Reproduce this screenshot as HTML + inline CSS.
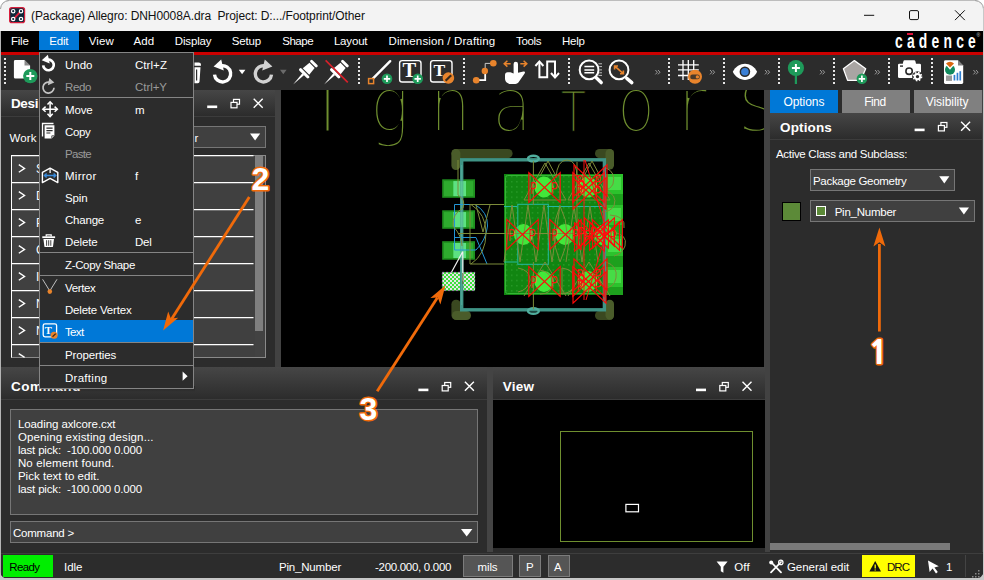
<!DOCTYPE html>
<html><head><meta charset="utf-8"><title>Allegro</title>
<style>
*{box-sizing:border-box;margin:0;padding:0}
html,body{width:984px;height:580px;overflow:hidden;background:#2c2c2c}
body{font-family:"Liberation Sans",sans-serif;font-size:12px;color:#fff;position:relative}
.a{position:absolute}
.t{position:absolute;white-space:pre}
.hd{position:absolute;background:linear-gradient(#464646,#2c2c2c);border-bottom:1px solid #3c3c3c}
.box{position:absolute;background:#404040;border:1px solid #767676}
svg{position:absolute;overflow:visible}
</style></head><body>

<div class="a" style="left:0;top:0;width:984px;height:31px;background:#f3f3f3;border-top:1px solid #bdbdbd"></div>
<svg style="left:0;top:0" width="984" height="31" viewBox="0 0 984 31">
<path d="M0 0H8Q1 1 0 8z" fill="#fff"/><path d="M984 0H976Q983 1 984 8z" fill="#fff"/>
<path d="M0.500 9Q1 1.500 9 0.500" fill="none" stroke="#a0a0a0"/><path d="M983.500 9Q983 1.500 975 0.500" fill="none" stroke="#a0a0a0"/>
<rect x="9.600" y="7.600" width="15" height="15" rx="2.200" fill="#10283a" stroke="#d81e3c" stroke-width="1.200"/>
<path d="M12 20.800L22.400 9.400" stroke="#e0203c" stroke-width="1.900"/>
<g fill="#10283a" stroke="#fff" stroke-width="1.200"><circle cx="13.200" cy="11.200" r="1.700"/><circle cx="21" cy="11.200" r="1.700"/><circle cx="13.200" cy="19" r="1.700"/><circle cx="21" cy="19" r="1.700"/></g>
<path d="M864 15.300h10.200" stroke="#111" stroke-width="1"/>
<rect x="909.500" y="10.600" width="9" height="9" rx="1.400" fill="none" stroke="#111" stroke-width="1"/>
<path d="M955 10.300l9.800 9.800M964.800 10.300l-9.800 9.800" stroke="#111" stroke-width="1"/>
</svg>
<span class="t" style="left:31.0px;top:8.8px;font-size:12px;line-height:14px;letter-spacing:-0.09px;color:#111;">(Package) Allegro: DNH0008A.dra  Project: D:.../Footprint/Other</span>
<div class="a" style="left:0;top:31px;width:984px;height:21px;background:#000"></div>
<div class="a" style="left:39px;top:31px;width:40px;height:19px;background:#0078d7"></div>
<span class="t" style="left:11.1px;top:34.1px;font-size:11.5px;line-height:14px;letter-spacing:-0.28px;color:#fff;">File</span>
<span class="t" style="left:49.2px;top:34.1px;font-size:11.5px;line-height:14px;letter-spacing:-0.15px;color:#fff;">Edit</span>
<span class="t" style="left:88.8px;top:34.1px;font-size:11.5px;line-height:14px;letter-spacing:0.07px;color:#fff;">View</span>
<span class="t" style="left:133.5px;top:34.1px;font-size:11.5px;line-height:14px;letter-spacing:0.15px;color:#fff;">Add</span>
<span class="t" style="left:174.8px;top:34.1px;font-size:11.5px;line-height:14px;letter-spacing:-0.16px;color:#fff;">Display</span>
<span class="t" style="left:231.8px;top:34.1px;font-size:11.5px;line-height:14px;letter-spacing:-0.15px;color:#fff;">Setup</span>
<span class="t" style="left:282.2px;top:34.1px;font-size:11.5px;line-height:14px;letter-spacing:-0.47px;color:#fff;">Shape</span>
<span class="t" style="left:333.9px;top:34.1px;font-size:11.5px;line-height:14px;letter-spacing:-0.17px;color:#fff;">Layout</span>
<span class="t" style="left:388.5px;top:34.1px;font-size:11.5px;line-height:14px;letter-spacing:0.13px;color:#fff;">Dimension / Drafting</span>
<span class="t" style="left:516.0px;top:34.1px;font-size:11.5px;line-height:14px;letter-spacing:-0.35px;color:#fff;">Tools</span>
<span class="t" style="left:561.9px;top:34.1px;font-size:11.5px;line-height:14px;letter-spacing:-0.21px;color:#fff;">Help</span>
<div class="a" style="left:906.800px;top:33.200px;width:6.400px;height:1.700px;background:#e0113a"></div>
<span class="t" style="left:894.600px;top:28.500px;font-size:21px;line-height:24px;letter-spacing:6.400px;font-weight:bold;transform:scaleX(.66);transform-origin:0 0">cadence</span>
<span class="t" style="left:976.500px;top:31.500px;font-size:5px;line-height:6px;color:#ccc">®</span>
<div class="a" style="left:0;top:52px;width:984px;height:3px;background:#cc0000"></div>
<div class="a" style="left:0;top:55px;width:984px;height:35px;background:#2c2c2c"></div>
<svg style="left:0;top:55px" width="984" height="35" viewBox="0 55 984 35">
<defs>
<g id="sepd" fill="#e6e6e6"><rect y="58" width="2" height="2"/><rect y="62" width="2" height="2"/><rect y="66" width="2" height="2"/><rect y="70" width="2" height="2"/><rect y="74" width="2" height="2"/><rect y="78" width="2" height="2"/><rect y="82" width="2" height="2"/></g>
<g id="chev" fill="none" stroke="#a8a8a8" stroke-width=".9"><path d="M0 0l2 2.2l-2 2.2M2.6 0l2 2.2l-2 2.2"/></g>
<g id="gplus"><circle r="5.3" fill="#1e9a5a"/><path d="M-3.2 0h6.4M0 -3.2v6.4" stroke="#fff" stroke-width="1.7"/></g>
<g id="pin" fill="#fff"><polygon points="-1.2,2 1.2,2 0,15.5"/><rect x="-6.2" y="-0.6" width="12.4" height="2.8" rx="1.3"/><polygon points="-4.3,-1.6 4.3,-1.6 3.4,-9.6 -3.4,-9.6"/><rect x="-4.4" y="-13.4" width="8.8" height="2.7" rx="1.2"/></g>
</defs>
<use href="#sepd" x="4"/>
<!-- new file -->
<path d="M15.3 60h9.2l5.6 5.6v11.6a1.4 1.4 0 0 1-1.4 1.4h-13.4a1.4 1.4 0 0 1-1.4-1.4v-15.8a1.4 1.4 0 0 1 1.4-1.4z" fill="#fff"/>
<path d="M24.5 60v5.6h5.6z" fill="#2b2b2b" opacity=".55"/>
<circle cx="30.3" cy="76.1" r="7.2" fill="#1e9a5a"/><path d="M26.3 76.1h8M30.3 72.1v8" stroke="#fff" stroke-width="2"/>
<!-- trash partial -->
<path d="M194.5 62.4h4.2a2.3 2.3 0 0 1 2.3 2.3v1h-6.5z" fill="#fff"/><path d="M194.5 67.2h6l-1 14.6a1.6 1.6 0 0 1-1.6 1.4h-3.4z" fill="#fff"/><path d="M196.6 69.5v11" stroke="#2b2b2b" stroke-width="1.2"/>
<!-- undo -->
<g transform="translate(222.6,74)"><path d="M-1.6 -8.1A8.1 8.1 0 1 1 -8.1 0.6" fill="none" stroke="#fff" stroke-width="3.4"/><polygon points="-1.4,-14.6 -9,-7.6 1.2,-3.4" fill="#fff"/></g>
<polygon points="238.8,69.8 245.4,69.8 242.1,74.2" fill="#fff"/>
<!-- redo -->
<g transform="translate(263.4,74) scale(-1,1)"><path d="M-1.6 -8.1A8.1 8.1 0 1 1 -8.1 0.6" fill="none" stroke="#d2d2d2" stroke-width="3.4"/><polygon points="-1.4,-14.6 -9,-7.6 1.2,-3.4" fill="#d2d2d2"/></g>
<polygon points="280,69.8 286.6,69.8 283.3,74.2" fill="#6a6a6a"/>
<!-- pin -->
<use href="#pin" transform="translate(304.8,72.7) rotate(45) scale(1.07)"/>
<!-- unpin -->
<use href="#pin" transform="translate(335.8,72.7) rotate(45) scale(1.07)"/>
<path d="M325.6 60.4L347.8 82.4" stroke="#d8202a" stroke-width="1.6"/>
<use href="#sepd" x="358"/>
<!-- add line -->
<path d="M371.6 79.8L390.2 61.2" stroke="#fff" stroke-width="2.4" stroke-linecap="round"/>
<rect x="368.6" y="78.6" width="5" height="5" fill="#2b2b2b" stroke="#e8842c" stroke-width="1.5"/>
<use href="#gplus" x="387" y="78.8"/>
<!-- add text -->
<rect x="399.6" y="60.6" width="21.4" height="21.4" rx="2.6" fill="none" stroke="#fff" stroke-width="1.4"/>
<text x="409.3" y="77.4" font-family="Liberation Serif,serif" font-weight="bold" font-size="20.5" fill="#fff" text-anchor="middle">T</text>
<use href="#gplus" x="417.7" y="78.8"/>
<!-- edit text -->
<rect x="430.6" y="60.6" width="21.4" height="21.4" rx="2.6" fill="none" stroke="#fff" stroke-width="1.4"/>
<text x="439.3" y="75.6" font-family="Liberation Serif,serif" font-weight="bold" font-size="17.5" fill="#fff" text-anchor="middle">T</text>
<circle cx="448.4" cy="78" r="5.8" fill="#e8842c"/><path d="M445.6 80.8L451.2 75.2" stroke="#3a2a1a" stroke-width="2.2"/>
<use href="#sepd" x="463"/>
<!-- route -->
<path d="M476.2 80.2H485.2V71" fill="none" stroke="#fff" stroke-width="1.8"/><path d="M485.2 71V63.4H493" fill="none" stroke="#c8c8c8" stroke-width="1"/>
<circle cx="476.2" cy="80.2" r="3.3" fill="#e8842c"/><circle cx="484.8" cy="71" r="3.2" fill="#e8842c"/><circle cx="493.3" cy="63.2" r="3.3" fill="#e8842c"/>
<!-- hand -->
<path d="M513.6 64a2.2 2.2 0 0 1 4.4 0v8.8l5.4-1.4c1.6-.2 2 1 1.200 2.200l-6.200 8.800c-1.200 1.400-2.600 1.600-4.400 1.600h-3.600c-3 0-5.400-2.400-5.400-5.400v-3.600c0-1.600 1-2.800 2.600-2.800h1.600c1.400 0 2.400 .4 4.400 1.200z" fill="#fff"/>
<path d="M504.200 63.700h6.500M507.400 60.800l-3.200 2.900l3.200 2.900M520.300 63.700h6.500M523.600 60.800l3.200 2.900l-3.200 2.900" fill="none" stroke="#e8842c" stroke-width="1.5"/>
<!-- updown -->
<path d="M539.400 62V77.200H547.200V61.600H555V77" fill="none" stroke="#fff" stroke-width="2"/><path d="M535.400 66l4-4.600l4 4.600M551 73l4 4.600l4-4.600" fill="none" stroke="#fff" stroke-width="2"/>
<use href="#sepd" x="568"/>
<!-- zoom list -->
<circle cx="589.1" cy="69.9" r="9.400" fill="none" stroke="#fff" stroke-width="2"/><path d="M596 77.600L601.200 82.600" stroke="#fff" stroke-width="3.400" stroke-linecap="round"/>
<path d="M584.400 66.600h9.800M584.400 69.900h9.800M584.400 72.800h9.800" stroke="#fff" stroke-width="1.500"/>
<path d="M598.400 63.800h3.600M599.200 66.600h2.800M599.600 69.900h2.400M599.200 72.800h2.800M598.400 75.400h3.600" stroke="#bdbdbd" stroke-width="1"/>
<!-- zoom fit -->
<circle cx="619" cy="69.9" r="9.400" fill="none" stroke="#fff" stroke-width="2"/><path d="M626.800 78.400L631.800 82.600" stroke="#fff" stroke-width="3.400" stroke-linecap="round"/>
<path d="M615 66.400L623 73.400M614.600 69.400v-3.400h3.400M623.400 70.400v3.400h-3.400" fill="none" stroke="#e8842c" stroke-width="1.600"/>
<use href="#chev" x="655.400" y="70"/>
<use href="#sepd" x="668"/>
<!-- grid -->
<path d="M683 60v20M688.300 60v20M693.700 60v12M678 64.900h20.800M678 69.900h20.800M678 75.500h11" stroke="#fff" stroke-width="1.300"/>
<circle cx="695" cy="76.800" r="7" fill="#e8842c"/><rect x="690.200" y="74.600" width="9.600" height="4.600" rx="2.300" fill="#4a3a2a"/><circle cx="697.400" cy="76.900" r="1.700" fill="#e8842c"/>
<use href="#chev" x="710" y="70"/>
<use href="#sepd" x="723"/>
<!-- eye -->
<path d="M732.800 71.800C738 61 752 61 757.100 71.800C752 82.600 738 82.600 732.800 71.800z" fill="#fff"/><circle cx="744.900" cy="71.800" r="5.300" fill="#2b2b2b"/><circle cx="744.900" cy="71.800" r="3.800" fill="#3a7fd5"/>
<use href="#chev" x="765" y="70"/>
<use href="#sepd" x="778"/>
<!-- green pin -->
<rect x="794.800" y="74" width="2.200" height="10" fill="#1e9a5a"/><circle cx="795.900" cy="68" r="8.100" fill="#1e9a5a"/><path d="M791.900 68h8M795.900 64v8" stroke="#fff" stroke-width="2"/>
<use href="#chev" x="820" y="70"/>
<use href="#sepd" x="833"/>
<!-- pentagon -->
<polygon points="854.400,60.600 865.700,68.800 860.600,80.400 847.600,80.400 843.400,68.800" fill="#a9a5a3" stroke="#fff" stroke-width="1.300" stroke-linejoin="round"/>
<use href="#gplus" x="861.900" y="78.800"/>
<use href="#chev" x="875" y="70"/>
<use href="#sepd" x="888"/>
<!-- camera -->
<path d="M904.600 60.300h9.600a1.200 1.200 0 0 1 1.200 1l.6 2.400h3.600a1.400 1.400 0 0 1 1.400 1.400v11.600a1.400 1.400 0 0 1-1.400 1.400h-20.200a1.400 1.400 0 0 1-1.400-1.400v-11.600a1.400 1.400 0 0 1 1.400-1.400h3.400l.6-2.400a1.200 1.200 0 0 1 1.200-1z" fill="#fff"/>
<rect x="900" y="65.400" width="3" height="1.400" fill="#2b2b2b"/>
<circle cx="909.100" cy="71.200" r="3.200" fill="#fff" stroke="#2b2b2b" stroke-width="1.600"/>
<circle cx="917.500" cy="76.600" r="5.400" fill="#2b2b2b"/>
<circle cx="917.500" cy="76.600" r="2.700" fill="none" stroke="#fff" stroke-width="2"/>
<circle cx="917.500" cy="76.600" r="4.100" fill="none" stroke="#fff" stroke-width="1.500" stroke-dasharray="1.600 1.620"/>
<use href="#sepd" x="931"/>
<!-- report -->
<path d="M945.400 60.300h12.600l5.200 5.200v17.000a1.400 1.400 0 0 1-1.400 1.400h-16.400a1.400 1.400 0 0 1-1.400-1.400v-20.800a1.400 1.400 0 0 1 1.400-1.400z" fill="#fff"/><path d="M958 60.300v5.200h5.200z" fill="#2b2b2b" opacity=".6"/>
<circle cx="950" cy="69.700" r="5" fill="#128a5e"/><path d="M950 69.700L945.600 64.600A6.600 6.600 0 0 1 954.400 64.600z" fill="#fff"/><path d="M950 67.600L946 63.400A6 6 0 0 1 954 63.400z" fill="#d9660f"/>
<rect x="946" y="75.500" width="6" height="5.400" fill="#9a9a9a"/>
<rect x="953.600" y="74.900" width="1.700" height="5.600" fill="#2f7fd0"/><rect x="956.600" y="72.800" width="1.700" height="7.700" fill="#2f7fd0"/><rect x="959.400" y="71.200" width="1.700" height="9.300" fill="#2f7fd0"/>
<use href="#chev" x="973.400" y="70"/>
</svg>

<div class="a" style="left:0;top:90px;width:281px;height:277px;background:#424242"></div>
<div class="a" style="left:0;top:116px;width:275px;height:251px;background:#2c2c2c"></div>
<div class="hd" style="left:0;top:90px;width:275px;height:27px"></div>
<span class="t" style="left:10.9px;top:96.4px;font-size:13.5px;line-height:16px;letter-spacing:-0.33px;color:#fff;font-weight:bold;">Desi</span>
<svg style="left:0;top:0" width="984" height="580"><path d="M207.2 106.8h10" stroke="#fff" stroke-width="2.600"/>
<rect x="233.5" y="99.4" width="6" height="4.800" fill="none" stroke="#fff" stroke-width="1.200"/><rect x="231.0" y="102.4" width="6" height="5.400" fill="#373737" stroke="#fff" stroke-width="1.200"/>
<path d="M253.7 98.7l9 9M262.7 98.7l-9 9" stroke="#fff" stroke-width="1.400"/></svg>
<span class="t" style="left:9.5px;top:131.3px;font-size:11.5px;line-height:14px;letter-spacing:0.09px;color:#fff;">Work</span>
<div class="box" style="left:60px;top:126px;width:206px;height:22px"></div>
<span class="t" style="left:194.5px;top:131.1px;font-size:11.5px;line-height:14px;letter-spacing:0.00px;color:#fff;">r</span>
<svg style="left:0;top:0" width="984" height="580"><polygon points="250,133.400 260.200,133.400 255.100,140.600" fill="#fff"/></svg>
<div class="a" style="left:11px;top:155px;width:255px;height:203px;background:#404040;border:1px solid #8a8a8a;border-left:1.300px solid #fff"></div>
<div class="a" style="left:254.500px;top:156px;width:9px;height:201px;background:#424242"></div>
<div class="a" style="left:255px;top:156px;width:8px;height:175px;background:#7f7f7f"></div>
<svg style="left:0;top:0" width="984" height="580"><path d="M11 155.600H253.500" stroke="#fff" stroke-width="1.300"/><path d="M12 182.6H253.500" stroke="#fff" stroke-width="1.300"/><path d="M18.800 164.6l5.800 3.800l-5.800 3.800" fill="none" stroke="#fff" stroke-width="1.300"/><text x="36" y="173.0" font-size="12" fill="#fff" font-family="Liberation Sans,sans-serif">S</text><path d="M12 209.6H253.500" stroke="#fff" stroke-width="1.300"/><path d="M18.800 191.6l5.800 3.800l-5.800 3.800" fill="none" stroke="#fff" stroke-width="1.300"/><text x="36" y="200.0" font-size="12" fill="#fff" font-family="Liberation Sans,sans-serif">D</text><path d="M12 236.6H253.500" stroke="#fff" stroke-width="1.300"/><path d="M18.800 218.6l5.800 3.800l-5.800 3.800" fill="none" stroke="#fff" stroke-width="1.300"/><text x="36" y="227.0" font-size="12" fill="#fff" font-family="Liberation Sans,sans-serif">P</text><path d="M12 263.6H253.500" stroke="#fff" stroke-width="1.300"/><path d="M18.800 245.6l5.800 3.800l-5.800 3.800" fill="none" stroke="#fff" stroke-width="1.300"/><text x="36" y="254.0" font-size="12" fill="#fff" font-family="Liberation Sans,sans-serif">C</text><path d="M12 290.6H253.500" stroke="#fff" stroke-width="1.300"/><path d="M18.800 272.6l5.800 3.800l-5.800 3.800" fill="none" stroke="#fff" stroke-width="1.300"/><text x="36" y="281.0" font-size="12" fill="#fff" font-family="Liberation Sans,sans-serif">I</text><path d="M12 317.6H253.500" stroke="#fff" stroke-width="1.300"/><path d="M18.800 299.6l5.800 3.800l-5.800 3.800" fill="none" stroke="#fff" stroke-width="1.300"/><text x="36" y="308.0" font-size="12" fill="#fff" font-family="Liberation Sans,sans-serif">N</text><path d="M12 344.6H253.500" stroke="#fff" stroke-width="1.300"/><path d="M18.800 326.6l5.800 3.800l-5.800 3.800" fill="none" stroke="#fff" stroke-width="1.300"/><text x="36" y="335.0" font-size="12" fill="#fff" font-family="Liberation Sans,sans-serif">N</text><path d="M18.800 353.600l5.800 3.800" fill="none" stroke="#fff" stroke-width="1.300"/></svg>
<div class="a" style="left:281px;top:90px;width:483px;height:277px;background:#000"></div>
<svg style="left:281px;top:90px;overflow:hidden" width="483" height="277" viewBox="281 90 483 277" font-family="Liberation Sans,sans-serif">
<defs>
<pattern id="dots" x="504" y="174" width="5.200" height="5.200" patternUnits="userSpaceOnUse"><rect x="2" y="2" width="1" height="1" fill="#3fae3f"/></pattern>
<pattern id="chk" x="442" y="272" width="4" height="4" patternUnits="userSpaceOnUse"><rect width="4" height="4" fill="#3fe03f"/><rect width="2" height="2" fill="#e6e6e6"/><rect x="2" y="2" width="2" height="2" fill="#e6e6e6"/></pattern>
<g id="bow" fill="none" stroke="#ff0808" stroke-width="1.100"><path d="M-15.700 -15V15L0 0zM15.700 -15V15L0 0z"/></g>
</defs>
<g font-family="DejaVu Sans,sans-serif" font-weight="200" fill="#6f8f2f" stroke="#000">
<text transform="translate(327.5,130.7) scale(1.000,1)" font-size="60" stroke-width="1.1" text-anchor="middle">I</text>
<text transform="translate(389.5,130.7) scale(0.870,1)" font-size="75" stroke-width="2" text-anchor="middle">g</text>
<text transform="translate(450.5,130.7) scale(0.870,1)" font-size="75" stroke-width="2" text-anchor="middle">n</text>
<text transform="translate(512.0,130.7) scale(0.870,1)" font-size="75" stroke-width="2" text-anchor="middle">a</text>
<text transform="translate(573.4,130.7) scale(0.740,1)" font-size="55" stroke-width="0.9" text-anchor="middle">T</text>
<text transform="translate(636.0,130.7) scale(0.830,1)" font-size="75" stroke-width="2" text-anchor="middle">o</text>
<text transform="translate(692.0,130.7) scale(0.980,1)" font-size="75" stroke-width="2" text-anchor="middle">r</text>
<text transform="translate(757.5,130.7) scale(0.870,1)" font-size="88" stroke-width="2.3" text-anchor="middle">s</text>
</g>
<g fill="#3a4820"><rect x="451.400" y="149" width="61.200" height="9.200" rx="4.600"/><rect x="595" y="149" width="19" height="9.200" rx="4.600"/><rect x="451.400" y="299.800" width="9.400" height="20" rx="4.500"/><rect x="595" y="311" width="19" height="9" rx="4.500"/></g>
<g fill="#4a5c2a"><rect x="451.400" y="149" width="9" height="21" rx="4.500"/><rect x="605.500" y="149" width="8.500" height="20.500" rx="4.200"/><rect x="452" y="311" width="19" height="9" rx="4.500"/><rect x="605.500" y="299.800" width="8.500" height="20" rx="4.200"/></g>
<rect x="504" y="174" width="119" height="121" fill="#118511"/>
<rect x="504" y="174" width="101" height="121" fill="url(#dots)"/>
<rect x="505.500" y="175.500" width="99" height="118" rx="2" fill="none" stroke="#35b535" stroke-width="1"/>
<rect x="605" y="174" width="18" height="20" fill="#2cc22c"/>
<rect x="608" y="177" width="13" height="13" fill="#46dc46"/>
<rect x="605" y="205" width="18" height="20" fill="#2cc22c"/>
<rect x="608" y="208" width="13" height="13" fill="#46dc46"/>
<rect x="605" y="236" width="18" height="20" fill="#2cc22c"/>
<rect x="608" y="239" width="13" height="13" fill="#46dc46"/>
<rect x="605" y="267" width="18" height="20" fill="#2cc22c"/>
<rect x="608" y="270" width="13" height="13" fill="#46dc46"/>
<rect x="605" y="194" width="18" height="11" fill="#1da01d"/><rect x="605" y="225" width="18" height="11" fill="#1da01d"/><rect x="605" y="256" width="18" height="11" fill="#1da01d"/><rect x="605" y="287" width="18" height="8" fill="#1da01d"/>
<ellipse cx="544" cy="187" rx="9.600" ry="10.400" fill="#42e83a"/>
<ellipse cx="588" cy="187" rx="9.600" ry="10.400" fill="#42e83a"/>
<ellipse cx="523.5" cy="234.5" rx="9.600" ry="10.400" fill="#42e83a"/>
<ellipse cx="565" cy="234.5" rx="9.600" ry="10.400" fill="#42e83a"/>
<ellipse cx="604" cy="235" rx="9.600" ry="10.400" fill="#42e83a"/>
<ellipse cx="544" cy="281.5" rx="9.600" ry="10.400" fill="#42e83a"/>
<ellipse cx="588" cy="281.5" rx="9.600" ry="10.400" fill="#42e83a"/>
<rect x="442.200" y="179.3" width="32.800" height="18.500" fill="#1f901f"/>
<rect x="444" y="181.1" width="29.200" height="15" fill="#2eab2e"/>
<rect x="453.400" y="181.1" width="12.600" height="15" fill="#4fd66f"/>
<rect x="442.200" y="210.3" width="32.800" height="18.500" fill="#1f901f"/>
<rect x="444" y="212.1" width="29.200" height="15" fill="#2eab2e"/>
<rect x="453.400" y="212.1" width="12.600" height="15" fill="#4fd66f"/>
<rect x="442.200" y="241.2" width="32.800" height="18.500" fill="#1f901f"/>
<rect x="444" y="243" width="29.200" height="15" fill="#2eab2e"/>
<rect x="453.400" y="243" width="12.600" height="15" fill="#4fd66f"/>
<rect x="442.200" y="272.200" width="32.800" height="18.500" fill="url(#chk)" stroke="#7a5a9a" stroke-width=".6" stroke-dasharray="2 2"/>
<rect x="461.700" y="159.800" width="142.700" height="150" fill="none" stroke="#3f9486" stroke-width="3.400"/>
<path d="M461.700 165V305" stroke="#5fb8a8" stroke-width="1" opacity=".6"/>
<g fill="none" stroke="#50ae9e" stroke-width="2.400"><ellipse cx="533.400" cy="158.600" rx="5.400" ry="2.800"/><ellipse cx="533.400" cy="311" rx="5.400" ry="2.800"/></g>
<rect x="453.400" y="181.1" width="12.600" height="15" fill="#6ff09a" opacity=".45"/>
<rect x="453.400" y="212.1" width="12.600" height="15" fill="#6ff09a" opacity=".45"/>
<rect x="453.400" y="243" width="12.600" height="15" fill="#6ff09a" opacity=".45"/>
<g fill="none" stroke="#25b8a0" stroke-width="1"><rect x="517.800" y="204.300" width="30.500" height="60"/><path d="M504 206.500H517M547 206.500H605M504 262H517"/></g>
<g fill="none" stroke="#2396d6" stroke-width="1"><path d="M454.500 250V204.500H475Q488 212 487.500 226Q486 240 476 250H454.500M455 237.500H476L487 264"/></g>
<g fill="none" stroke="#7d8c3a" stroke-width="1">
<path d="M458 233.500H600M470 204.500H504M470 204.500V264H504M471 204.500Q486 214 486 233Q486 254 471 264M476 205L483 232L490 205"/>
<path d="M458 160V195Q466 200 463 208Q452 214 453 226Q462 236 462 246"/>
<path d="M504 262L512 205L520 262L528 205L536 262L544 205L552 262L560 205"/>
<path d="M560 262Q548 233 560 206Q574 233 560 262M566 262L574 206L582 262L590 206L598 262"/>
<path d="M533.400 161V205M533.400 262V309M577 162V262M540 176L548 161L556 176M556 178Q557 160 567 160Q577 160 577 178V196M584 176L592 161L600 176"/>
<path d="M606 168Q616 172 613 184Q610 190 604 190Q618 194 614 206Q610 212 602 212M610 215Q626 216 624 228M612 232Q628 234 625 246Q622 254 614 256"/>
<path d="M540 270Q552 272 552 284Q552 294 540 294M562 268V294M562 268Q576 270 574 281Q576 292 562 294M606 262Q618 266 616 278Q614 288 604 288"/>
<path d="M518 268Q530 270 530 280Q528 290 518 292"/>
<path d="M524 200L545 163L566 200zM568 200L589 163L610 200zM524 296L545 262L566 296M568 296L589 262L610 296M530 174V200M560 174V200"/>
</g>
<g fill="none" stroke="#f0f0f0" stroke-width="1.200"><path d="M462.800 251.500V281M462.800 251.500L451.600 272"/></g>
<path d="M462.800 273V284" stroke="#6a6a3a" stroke-width="1"/>
<g>
<use href="#bow" transform="translate(544.5,187.5) scale(1)"/>
<text transform="translate(530.3,193.5) scale(.58,1)" font-size="17" fill="#ff1010">P</text>
<text transform="translate(550.9,193.5) scale(.58,1)" font-size="17" fill="#ff1010">P</text>
<use href="#bow" transform="translate(522.5,234.5) scale(1)"/>
<text transform="translate(508.3,240.5) scale(.58,1)" font-size="17" fill="#ff1010">P</text>
<text transform="translate(528.9,240.5) scale(.58,1)" font-size="17" fill="#ff1010">P</text>
<use href="#bow" transform="translate(565.5,234.5) scale(1)"/>
<text transform="translate(551.3,240.5) scale(.58,1)" font-size="17" fill="#ff1010">P</text>
<text transform="translate(571.9,240.5) scale(.58,1)" font-size="17" fill="#ff1010">P</text>
<use href="#bow" transform="translate(544.5,281.5) scale(1)"/>
<text transform="translate(530.3,287.5) scale(.58,1)" font-size="17" fill="#ff1010">P</text>
<text transform="translate(550.9,287.5) scale(.58,1)" font-size="17" fill="#ff1010">P</text>
<use href="#bow" transform="translate(588.5,187.5) scale(1)"/>
<use href="#bow" transform="translate(590.5,180.5) scale(1.05)"/>
<use href="#bow" transform="translate(589.5,193.5) scale(1.05)"/>
<text transform="translate(576.5,186.5) scale(.58,1)" font-size="17" fill="#ff1010">P</text>
<text transform="translate(576.5,197.5) scale(.58,1)" font-size="17" fill="#ff1010">P</text>
<text transform="translate(594.5,186.5) scale(.58,1)" font-size="17" fill="#ff1010">P</text>
<text transform="translate(594.5,197.5) scale(.58,1)" font-size="17" fill="#ff1010">P</text>
<text transform="translate(578.5,191.5) scale(.58,1)" font-size="17" fill="#ff1010">P</text>
<use href="#bow" transform="translate(588.5,281.5) scale(1)"/>
<use href="#bow" transform="translate(590.5,274.5) scale(1.05)"/>
<use href="#bow" transform="translate(589.5,287.5) scale(1.05)"/>
<text transform="translate(576.5,280.5) scale(.58,1)" font-size="17" fill="#ff1010">P</text>
<text transform="translate(576.5,291.5) scale(.58,1)" font-size="17" fill="#ff1010">P</text>
<text transform="translate(594.5,280.5) scale(.58,1)" font-size="17" fill="#ff1010">P</text>
<text transform="translate(594.5,291.5) scale(.58,1)" font-size="17" fill="#ff1010">P</text>
<text transform="translate(578.5,285.5) scale(.58,1)" font-size="17" fill="#ff1010">P</text>
<use href="#bow" transform="translate(593.5,234) scale(0.95)"/>
<use href="#bow" transform="translate(599.5,232) scale(0.95)"/>
<use href="#bow" transform="translate(604.5,236) scale(0.95)"/>
<use href="#bow" transform="translate(589.5,237) scale(0.95)"/>
<use href="#bow" transform="translate(607.5,234) scale(0.95)"/>
<text transform="translate(578,239) scale(.58,1)" font-size="17" fill="#ff1010">P</text>
<text transform="translate(584,242) scale(.58,1)" font-size="17" fill="#ff1010">P</text>
<text transform="translate(590,239) scale(.58,1)" font-size="17" fill="#ff1010">P</text>
<text transform="translate(596,242) scale(.58,1)" font-size="17" fill="#ff1010">P</text>
<text transform="translate(602,239) scale(.58,1)" font-size="17" fill="#ff1010">P</text>
<text transform="translate(610,242) scale(.58,1)" font-size="17" fill="#ff1010">P</text>
<path d="M585 160L604 222M586 300L604 240M584 160V300M604 168V300" fill="none" stroke="#ff1010" stroke-width="1"/>
</g>
</svg>
<div class="a" style="left:764px;top:90px;width:220px;height:462px;background:#424242"></div>
<div class="a" style="left:770px;top:90px;width:212px;height:462px;background:#2c2c2c"></div>
<div class="a" style="left:770px;top:90px;width:68px;height:23px;background:#0078d7"></div>
<div class="a" style="left:842px;top:90px;width:68px;height:23px;background:#808080"></div>
<div class="a" style="left:914px;top:90px;width:68px;height:23px;background:#808080"></div>
<span class="t" style="left:783.4px;top:95.1px;font-size:12px;line-height:14px;letter-spacing:-0.05px;color:#fff;">Options</span>
<span class="t" style="left:864.2px;top:95.1px;font-size:12px;line-height:14px;letter-spacing:-0.44px;color:#fff;">Find</span>
<span class="t" style="left:925.7px;top:95.1px;font-size:12px;line-height:14px;letter-spacing:-0.03px;color:#fff;">Visibility</span>
<div class="hd" style="left:770px;top:113px;width:212px;height:27px"></div>
<span class="t" style="left:780.0px;top:119.9px;font-size:13.5px;line-height:16px;letter-spacing:0.13px;color:#fff;font-weight:bold;">Options</span>
<svg style="left:0;top:0" width="984" height="580"><path d="M914.6 129.9h10" stroke="#fff" stroke-width="2.600"/>
<rect x="940.9" y="122.5" width="6" height="4.800" fill="none" stroke="#fff" stroke-width="1.200"/><rect x="938.4" y="125.5" width="6" height="5.400" fill="#373737" stroke="#fff" stroke-width="1.200"/>
<path d="M961.1 121.8l9 9M970.1 121.8l-9 9" stroke="#fff" stroke-width="1.400"/></svg>
<span class="t" style="left:775.9px;top:146.9px;font-size:11.5px;line-height:14px;letter-spacing:-0.29px;color:#fff;">Active Class and Subclass:</span>
<div class="box" style="left:810px;top:169px;width:145px;height:22px"></div>
<span class="t" style="left:813.0px;top:173.7px;font-size:11.5px;line-height:14px;letter-spacing:-0.31px;color:#fff;">Package Geometry</span>
<div class="box" style="left:810px;top:200px;width:165px;height:22px"></div>
<span class="t" style="left:834.7px;top:204.7px;font-size:11.5px;line-height:14px;letter-spacing:-0.25px;color:#fff;">Pin_Number</span>
<div class="a" style="left:782px;top:202px;width:19px;height:19px;background:#5c8a38;border:1.500px solid #000"></div>
<div class="a" style="left:816px;top:206px;width:10px;height:10px;background:#5c8a38;border:1px solid #fff"></div>
<svg style="left:0;top:0" width="984" height="580"><polygon points="939.200,176.300 949.400,176.300 944.300,183.500" fill="#fff"/><polygon points="958.800,207.400 969,207.400 963.900,214.600" fill="#fff"/></svg>
<div class="a" style="left:770px;top:542.500px;width:179.500px;height:7.500px;background:#7a7a7a"></div>
<div class="a" style="left:0;top:367px;width:493px;height:185px;background:#444"></div>
<div class="a" style="left:0;top:400px;width:487px;height:152px;background:#2c2c2c"></div>
<div class="hd" style="left:0;top:367px;width:487px;height:33px"></div>
<span class="t" style="left:10.9px;top:379.1px;font-size:13.5px;line-height:16px;letter-spacing:0.59px;color:#fff;font-weight:bold;">Command</span>
<svg style="left:0;top:0" width="984" height="580"><path d="M418.4 389.9h10" stroke="#fff" stroke-width="2.600"/>
<rect x="444.7" y="382.5" width="6" height="4.800" fill="none" stroke="#fff" stroke-width="1.200"/><rect x="442.2" y="385.5" width="6" height="5.400" fill="#373737" stroke="#fff" stroke-width="1.200"/>
<path d="M464.9 381.8l9 9M473.9 381.8l-9 9" stroke="#fff" stroke-width="1.400"/></svg>
<div class="box" style="left:10px;top:409px;width:468px;height:106px"></div>
<span class="t" style="left:17.9px;top:417.3px;font-size:11.5px;line-height:14px;letter-spacing:-0.08px;color:#fff;">Loading axlcore.cxt</span>
<span class="t" style="left:17.9px;top:430.3px;font-size:11.5px;line-height:14px;letter-spacing:0.13px;color:#fff;">Opening existing design...</span>
<span class="t" style="left:17.9px;top:443.3px;font-size:11.5px;line-height:14px;letter-spacing:-0.17px;color:#fff;">last pick:  -100.000 0.000</span>
<span class="t" style="left:17.9px;top:456.3px;font-size:11.5px;line-height:14px;letter-spacing:0.15px;color:#fff;">No element found.</span>
<span class="t" style="left:17.9px;top:469.3px;font-size:11.5px;line-height:14px;letter-spacing:0.02px;color:#fff;">Pick text to edit.</span>
<span class="t" style="left:17.9px;top:482.3px;font-size:11.5px;line-height:14px;letter-spacing:-0.17px;color:#fff;">last pick:  -100.000 0.000</span>
<div class="box" style="left:10px;top:521px;width:468px;height:22px"></div>
<span class="t" style="left:13.0px;top:526.1px;font-size:11.5px;line-height:14px;letter-spacing:-0.22px;color:#fff;">Command &gt;</span>
<svg style="left:0;top:0" width="984" height="580"><polygon points="461,529 472.400,529 466.700,536.600" fill="#fff"/></svg>
<div class="hd" style="left:493px;top:367px;width:271.500px;height:33px"></div>
<div class="a" style="left:493px;top:400px;width:271.500px;height:152px;background:#000"></div>
<div class="a" style="left:493px;top:548px;width:271.500px;height:4px;background:#2c2c2c"></div>
<span class="t" style="left:502.7px;top:379.1px;font-size:13.5px;line-height:16px;letter-spacing:0.30px;color:#fff;font-weight:bold;">View</span>
<svg style="left:0;top:0" width="984" height="580"><path d="M696.0 389.9h10" stroke="#fff" stroke-width="2.600"/>
<rect x="722.3" y="382.5" width="6" height="4.800" fill="none" stroke="#fff" stroke-width="1.200"/><rect x="719.8" y="385.5" width="6" height="5.400" fill="#373737" stroke="#fff" stroke-width="1.200"/>
<path d="M742.5 381.8l9 9M751.5 381.8l-9 9" stroke="#fff" stroke-width="1.400"/><rect x="560.500" y="431.500" width="192" height="110" fill="none" stroke="#6f8f2f"/><rect x="625.900" y="504.400" width="12.600" height="7.400" fill="none" stroke="#fff" stroke-width="1.200"/></svg>
<div class="a" style="left:0;top:552px;width:984px;height:28px;background:#2c2c2c"></div><div class="a" style="left:0;top:553px;width:984px;height:1px;background:#3e3e3e"></div>
<div class="a" style="left:3px;top:555px;width:50px;height:22px;background:#00ee00"></div>
<span class="t" style="left:9.2px;top:560.1px;font-size:11.5px;line-height:14px;letter-spacing:-0.59px;color:#000;">Ready</span>
<span class="t" style="left:64.0px;top:560.1px;font-size:11.5px;line-height:14px;letter-spacing:-0.01px;color:#fff;">Idle</span>
<span class="t" style="left:279.0px;top:560.1px;font-size:11.5px;line-height:14px;letter-spacing:-0.19px;color:#fff;">Pin_Number</span>
<span class="t" style="left:375.0px;top:560.1px;font-size:11.5px;line-height:14px;letter-spacing:-0.30px;color:#fff;">-200.000, 0.000</span>
<div class="a" style="left:463px;top:555px;width:50px;height:22px;background:#555;border:1px solid #7c7c7c"></div>
<span class="t" style="left:477.5px;top:560.1px;font-size:11.5px;line-height:14px;letter-spacing:-0.11px;color:#fff;">mils</span>
<div class="a" style="left:519px;top:555px;width:22px;height:22px;background:#555;border:1px solid #7c7c7c"></div>
<span class="t" style="left:526.0px;top:560.1px;font-size:11.5px;line-height:14px;letter-spacing:-1.17px;color:#fff;">P</span>
<div class="a" style="left:547.5px;top:555px;width:22px;height:22px;background:#555;border:1px solid #7c7c7c"></div>
<span class="t" style="left:554.0px;top:560.1px;font-size:11.5px;line-height:14px;letter-spacing:-0.17px;color:#fff;">A</span>
<span class="t" style="left:734.2px;top:560.1px;font-size:11.5px;line-height:14px;letter-spacing:0.22px;color:#fff;">Off</span>
<span class="t" style="left:786.9px;top:560.1px;font-size:11.5px;line-height:14px;letter-spacing:-0.03px;color:#fff;">General edit</span>
<div class="a" style="left:862px;top:555px;width:53px;height:22px;background:#ffff00"></div>
<span class="t" style="left:887.0px;top:560.1px;font-size:11.5px;line-height:14px;letter-spacing:-0.97px;color:#111;">DRC</span>
<span class="t" style="left:946.0px;top:560.1px;font-size:11.5px;line-height:14px;letter-spacing:0.00px;color:#fff;">1</span>
<svg style="left:0;top:0" width="984" height="580">
<path d="M716.600 561.600h11l-4.200 5.200v6l-2.600-1.600v-4.400z" fill="#fff"/>
<g stroke="#fff" stroke-width="1.800" stroke-linecap="round"><path d="M771 562l10 10.400M781 562l-10 10.400"/></g><circle cx="771.200" cy="562.400" r="2" fill="#fff"/><circle cx="780.800" cy="562.400" r="2.200" fill="none" stroke="#fff" stroke-width="1.200"/>
<path d="M875.200 561l5.800 10.600h-11.600z" fill="#111"/><path d="M875.200 564.600v3.800M875.200 569.400v1.200" stroke="#ffff00" stroke-width="1.300"/>
<path d="M928 560.600l10.800 5.600l-4.400 1.200l3.400 4.600l-1.800 1.400l-3.400-4.800l-3 3.400z" fill="#fff"/>
<path d="M965.500 555v22" stroke="#444" stroke-width="1"/>
<g fill="#888"><rect x="978" y="570" width="1.500" height="1.500"/><rect x="975" y="573" width="1.500" height="1.500"/><rect x="978" y="573" width="1.500" height="1.500"/><rect x="972" y="576" width="1.500" height="1.500"/><rect x="975" y="576" width="1.500" height="1.500"/><rect x="978" y="576" width="1.500" height="1.500"/></g>
</svg>
<div class="a" style="left:42px;top:386px;width:153px;height:6px;background:linear-gradient(rgba(0,0,0,.35),rgba(0,0,0,0))"></div>
<div class="a" style="left:39px;top:52px;width:155px;height:337px;background:#2c2c2c;border:1px solid #858585"></div>
<span class="t" style="left:65.0px;top:58.2px;font-size:11.5px;line-height:14px;letter-spacing:0.00px;color:#fff;">Undo</span>
<span class="t" style="left:135.0px;top:58.2px;font-size:11.5px;line-height:14px;letter-spacing:0.06px;color:#fff;">Ctrl+Z</span>
<span class="t" style="left:65.0px;top:80.2px;font-size:11.5px;line-height:14px;letter-spacing:-0.37px;color:#9a9a9a;">Redo</span>
<span class="t" style="left:135.0px;top:80.2px;font-size:11.5px;line-height:14px;letter-spacing:-0.05px;color:#9a9a9a;">Ctrl+Y</span>
<span class="t" style="left:65.0px;top:103.2px;font-size:11.5px;line-height:14px;letter-spacing:-0.15px;color:#fff;">Move</span>
<span class="t" style="left:135.0px;top:103.2px;font-size:11.5px;line-height:14px;letter-spacing:-0.58px;color:#fff;">m</span>
<span class="t" style="left:65.0px;top:125.2px;font-size:11.5px;line-height:14px;letter-spacing:-0.34px;color:#fff;">Copy</span>
<span class="t" style="left:65.0px;top:147.2px;font-size:11.5px;line-height:14px;letter-spacing:-0.68px;color:#9a9a9a;">Paste</span>
<span class="t" style="left:65.0px;top:169.2px;font-size:11.5px;line-height:14px;letter-spacing:0.25px;color:#fff;">Mirror</span>
<span class="t" style="left:135.0px;top:169.2px;font-size:11.5px;line-height:14px;letter-spacing:0.31px;color:#fff;">f</span>
<span class="t" style="left:65.0px;top:191.2px;font-size:11.5px;line-height:14px;letter-spacing:-0.13px;color:#fff;">Spin</span>
<span class="t" style="left:65.0px;top:213.2px;font-size:11.5px;line-height:14px;letter-spacing:-0.21px;color:#fff;">Change</span>
<span class="t" style="left:135.0px;top:213.2px;font-size:11.5px;line-height:14px;letter-spacing:-0.90px;color:#fff;">e</span>
<span class="t" style="left:65.0px;top:235.2px;font-size:11.5px;line-height:14px;letter-spacing:-0.12px;color:#fff;">Delete</span>
<span class="t" style="left:135.0px;top:235.2px;font-size:11.5px;line-height:14px;letter-spacing:-0.25px;color:#fff;">Del</span>
<span class="t" style="left:65.0px;top:258.2px;font-size:11.5px;line-height:14px;letter-spacing:-0.35px;color:#fff;">Z-Copy Shape</span>
<span class="t" style="left:65.0px;top:281.2px;font-size:11.5px;line-height:14px;letter-spacing:-0.35px;color:#fff;">Vertex</span>
<span class="t" style="left:65.0px;top:303.2px;font-size:11.5px;line-height:14px;letter-spacing:-0.20px;color:#fff;">Delete Vertex</span>
<div class="a" style="left:40px;top:320px;width:153px;height:22px;background:#0078d7"></div>
<span class="t" style="left:65.0px;top:325.2px;font-size:11.5px;line-height:14px;letter-spacing:-0.65px;color:#fff;">Text</span>
<span class="t" style="left:65.0px;top:348.2px;font-size:11.5px;line-height:14px;letter-spacing:-0.14px;color:#fff;">Properties</span>
<span class="t" style="left:65.0px;top:371.2px;font-size:11.5px;line-height:14px;letter-spacing:0.28px;color:#fff;">Drafting</span>
<div class="a" style="left:40px;top:97px;width:153px;height:1px;background:#858585"></div>
<div class="a" style="left:40px;top:252px;width:153px;height:1px;background:#858585"></div>
<div class="a" style="left:40px;top:275px;width:153px;height:1px;background:#858585"></div>
<div class="a" style="left:40px;top:342px;width:153px;height:1px;background:#858585"></div>
<div class="a" style="left:40px;top:365px;width:153px;height:1px;background:#858585"></div>
<svg style="left:0;top:0" width="984" height="580">
<!-- undo -->
<g transform="translate(48.5,65)"><path d="M-1.200 -5.200A5.300 5.300 0 1 1 -5.300 0.300" fill="none" stroke="#fff" stroke-width="2.700"/><polygon points="-0.600,-10.200 -6.800,-4.800 1.200,-1.400" fill="#fff"/></g>
<g transform="translate(48.5,87.5) scale(-1,1)"><path d="M-1.200 -5.300A5.500 5.500 0 1 1 -5.500 0.300" fill="none" stroke="#c4c4c4" stroke-width="1.700"/><polygon points="-0.800,-9.400 -5.800,-5 0.600,-2.200" fill="#c4c4c4"/></g>
<!-- move -->
<g stroke="#fff" stroke-width="1.500" fill="none"><path d="M43 109.200h14.200M50.100 102v14.400"/><path d="M45.600 106.600l-2.800 2.600l2.800 2.600M54.600 106.600l2.800 2.600l-2.800 2.600M47.500 104.600l2.600-2.800l2.600 2.800M47.500 113.800l2.600 2.800l2.600-2.800"/></g>
<!-- copy -->
<path d="M42.500 136.500v-13h11" fill="none" stroke="#fff" stroke-width="1.300"/>
<path d="M44.600 125.200h9.800v10.600l-2.600 2.800h-7.200z" fill="#fff"/>
<path d="M46.400 128.200h6.200M46.400 130.600h6.200M46.400 133h4" stroke="#2c2c2c" stroke-width="1.200"/><path d="M51.800 138.600v-2.800h2.600" fill="none" stroke="#2c2c2c" stroke-width=".8"/>
<!-- mirror -->
<path d="M42.400 172.400L50.100 168.200L57.800 172.400V182.600L50.100 178.400L42.400 182.600z" fill="none" stroke="#fff" stroke-width="1.400" stroke-linejoin="round"/><path d="M50.100 168v5" stroke="#fff" stroke-width="1.300"/>
<path d="M44.600 175.500h11M46.600 173.500l-2.200 2l2.200 2M53.600 173.500l2.200 2l-2.200 2" fill="none" stroke="#3a8ad8" stroke-width="1.400"/>
<!-- trash -->
<path d="M42.300 237.200h12.800" stroke="#fff" stroke-width="1.800"/><path d="M46.200 236.400v-1.600h5v1.600" fill="none" stroke="#fff" stroke-width="1.200"/>
<path d="M43.400 239h10.600l-1 7.400a.8 .8 0 0 1-.8 .6h-7a.8 .8 0 0 1-.8-.6z" fill="#fff"/><path d="M46.600 240.200v5.600M48.700 240.200v5.600M50.800 240.200v5.600" stroke="#2c2c2c" stroke-width=".9"/>
<!-- vertex -->
<path d="M42.600 279.300L49.800 291L57 279.300" fill="none" stroke="#c0c0c0" stroke-width="1"/><circle cx="49.800" cy="291.600" r="2.300" fill="#e8842c"/>
<!-- text -->
<rect x="43.200" y="323.800" width="13.400" height="13" rx="1.800" fill="none" stroke="#fff" stroke-width="1.300"/>
<text x="48.200" y="333.600" font-family="Liberation Serif,serif" font-size="10.500" font-weight="bold" fill="#fff" text-anchor="middle">T</text>
<circle cx="54.100" cy="335.200" r="3.500" fill="#e8842c"/><path d="M52.500 336.800l3.200-3.200" stroke="#3a2a1a" stroke-width="1.300"/>
<!-- submenu arrow -->
<polygon points="182.600,371.600 187.600,376.200 182.600,380.800" fill="#fff"/>
</svg>

<svg style="left:0;top:0" width="984" height="580" font-family="Liberation Sans,sans-serif" font-weight="bold">
<g fill="#f06a0a" stroke="none">
<path d="M879.400 331.500V244" stroke="#f06a0a" stroke-width="2.800" fill="none"/>
<polygon points="879.400,227.600 885.400,246.600 879.400,242.200 873.400,246.600"/>
<path d="M249.300 197L171 320" stroke="#f06a0a" stroke-width="2.800" fill="none"/>
<polygon points="163.100,330.600 168.200,311.400 170.900,318.400 178.200,317.800"/>
<path d="M377.200 391.200L437.500 297.500" stroke="#f06a0a" stroke-width="2.800" fill="none"/>
<polygon points="445.500,285.200 440.400,304.400 437.700,297.400 430.400,298"/>
</g>
<g fill="#fff" stroke="#f06a0a" stroke-width="3" paint-order="stroke" stroke-linejoin="round" font-size="32">
<text x="878.600" y="363.600" text-anchor="middle" font-family="NanumGothic,Liberation Sans,sans-serif" font-weight="800" font-size="33">1</text>
<text x="260.400" y="189.600" text-anchor="middle">2</text>
<text x="368.500" y="419.600" text-anchor="middle">3</text>
</g>
</svg>

<div class="a" style="left:0;top:31px;width:1.200px;height:549px;background:#b4b4b4"></div>
<div class="a" style="left:983px;top:8px;width:1px;height:572px;background:#c8c8c8"></div>
<div class="a" style="left:0;top:578.300px;width:984px;height:1.700px;background:#c8c8c8"></div>
<svg style="left:0;top:0" width="984" height="580"><path d="M0 572Q1 578 8 579H0z" fill="#c8c8c8"/><path d="M984 571Q983 578 975 579H984z" fill="#c8c8c8"/></svg>
</body></html>
